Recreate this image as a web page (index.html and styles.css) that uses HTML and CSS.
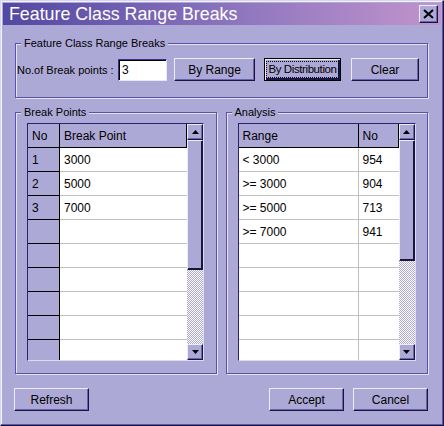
FILE: index.html
```html
<!DOCTYPE html>
<html>
<head>
<meta charset="utf-8">
<link rel="stylesheet" href="styles.css">
</head>
<body>
<div class="window">
  <div class="titlebar">
    <span class="title">Feature Class Range Breaks</span>
    <span class="close"><svg width="11" height="10" viewBox="0 0 11 10"><path d="M1 1 L10 9 M10 1 L1 9" stroke="#000" stroke-width="2"/></svg></span>
  </div>
  <div class="content">
    <fieldset class="group group-top">
      <legend>Feature Class Range Breaks</legend>
      <div class="row">
        <span class="label">No.of Break points :</span>
        <span class="input">3</span>
        <span class="btn btn-range">By Range</span>
        <span class="btn btn-default btn-dist"><span class="focus">By Distribution</span></span>
        <span class="btn btn-clear">Clear</span>
      </div>
    </fieldset>
    <div class="panels">
      <fieldset class="group panel panel-left">
        <legend>Break Points</legend>
        <div class="grid grid-left">
          <div class="table">
            <div class="tr head"><div class="td c-no hd">No</div><div class="td c-bp hd">Break Point</div></div>
            <div class="tr"><div class="td c-no">1</div><div class="td c-bp">3000</div></div>
            <div class="tr"><div class="td c-no">2</div><div class="td c-bp">5000</div></div>
            <div class="tr"><div class="td c-no">3</div><div class="td c-bp">7000</div></div>
            <div class="tr"><div class="td c-no"></div><div class="td c-bp"></div></div>
            <div class="tr"><div class="td c-no"></div><div class="td c-bp"></div></div>
            <div class="tr"><div class="td c-no"></div><div class="td c-bp"></div></div>
            <div class="tr"><div class="td c-no"></div><div class="td c-bp"></div></div>
            <div class="tr"><div class="td c-no"></div><div class="td c-bp"></div></div>
            <div class="tr"><div class="td c-no"></div><div class="td c-bp"></div></div>
          </div>
          <div class="scroll">
            <div class="sbtn"><svg width="7" height="4" viewBox="0 0 7 4"><path d="M3.5 0 L7 4 L0 4 Z" fill="#000"/></svg></div>
            <div class="thumb thumb-left"></div>
            <div class="track"></div>
            <div class="sbtn"><svg width="7" height="4" viewBox="0 0 7 4"><path d="M0 0 L7 0 L3.5 4 Z" fill="#000"/></svg></div>
          </div>
        </div>
      </fieldset>
      <fieldset class="group panel panel-right">
        <legend>Analysis</legend>
        <div class="grid grid-right">
          <div class="table">
            <div class="tr head"><div class="td c-range hd">Range</div><div class="td c-n hd">No</div></div>
            <div class="tr"><div class="td c-range">&lt; 3000</div><div class="td c-n">954</div></div>
            <div class="tr"><div class="td c-range">&gt;= 3000</div><div class="td c-n">904</div></div>
            <div class="tr"><div class="td c-range">&gt;= 5000</div><div class="td c-n">713</div></div>
            <div class="tr"><div class="td c-range">&gt;= 7000</div><div class="td c-n">941</div></div>
            <div class="tr"><div class="td c-range"></div><div class="td c-n"></div></div>
            <div class="tr"><div class="td c-range"></div><div class="td c-n"></div></div>
            <div class="tr"><div class="td c-range"></div><div class="td c-n"></div></div>
            <div class="tr"><div class="td c-range"></div><div class="td c-n"></div></div>
            <div class="tr"><div class="td c-range"></div><div class="td c-n"></div></div>
          </div>
          <div class="scroll">
            <div class="sbtn"><svg width="7" height="4" viewBox="0 0 7 4"><path d="M3.5 0 L7 4 L0 4 Z" fill="#000"/></svg></div>
            <div class="thumb thumb-right"></div>
            <div class="track"></div>
            <div class="sbtn"><svg width="7" height="4" viewBox="0 0 7 4"><path d="M0 0 L7 0 L3.5 4 Z" fill="#000"/></svg></div>
          </div>
        </div>
      </fieldset>
    </div>
    <div class="footer">
      <span class="btn btn-foot">Refresh</span>
      <span class="spacer"></span>
      <span class="btn btn-foot">Accept</span>
      <span class="btn btn-foot btn-cancel">Cancel</span>
    </div>
  </div>
</div>
</body>
</html>
```
FILE: styles.css
```css
* { box-sizing: border-box; }
body {
  margin: 0;
  font-family: "Liberation Sans", Arial, sans-serif;
  font-size: 11px;
  color: #000;
}
.window {
  width: 444px;
  height: 426px;
  background: #ada9d6;
  border: 1px solid;
  border-color: #d8d5f0 #1a1440 #1a1440 #d8d5f0;
  padding: 2px;
  box-shadow: inset -1px -1px 0 #5e57a6, inset 1px 1px 0 #f4f2ff;
}
.titlebar {
  height: 22px;
  display: flex;
  align-items: center;
  background: linear-gradient(90deg, #5247a2 0%, #8f77bf 55%, #c294cc 100%);
  color: #fff;
  padding: 0 3px 0 6px;
}
.title {
  flex: 1;
  font-size: 17.8px;
  line-height: 22px;
}
.close {
  width: 19px;
  height: 18px;
  background: #ada9d6;
  border: 1px solid;
  border-color: #eeecfa #1a1440 #1a1440 #eeecfa;
  box-shadow: inset -1px -1px 0 #6a63b0;
  display: flex;
  align-items: center;
  justify-content: center;
}
.content {
  padding: 0 13px 0 12px;
}
.group {
  margin: 0;
  border: 1px solid #5a52a6;
  box-shadow: 1px 1px 0 #e4e2f6, inset 1px 1px 0 #e4e2f6;
  padding: 0;
}
.group legend {
  font-size: 11px;
  line-height: 13px;
  padding: 0 3px;
  margin-left: 5px;
  background: #ada9d6;
}
.group-top {
  margin-top: 12px;
  height: 61px;
}
.row {
  display: flex;
  align-items: center;
  margin-top: 8px;
}
.label {
  margin-left: 1px;
  width: 101px;
  white-space: nowrap;
}
.input {
  width: 49px;
  height: 22px;
  background: #fff;
  border: 1px solid;
  border-color: #3a3288 #e8e6f8 #e8e6f8 #3a3288;
  box-shadow: inset 1px 1px 0 #000;
  font-size: 12px;
  line-height: 20px;
  padding-left: 3px;
}
.btn {
  height: 23px;
  display: flex;
  align-items: center;
  justify-content: center;
  background: #ada9d6;
  border: 1px solid;
  border-color: #eeecfa #1a1440 #1a1440 #eeecfa;
  box-shadow: inset -1px -1px 0 #6a63b0;
  font-size: 12px;
  white-space: nowrap;
}
.btn-range { margin-left: 7px; width: 81px; }
.btn-dist { margin-left: 9px; width: 77px; }
.btn-clear { margin-left: 10px; width: 68px; }
.btn-default {
  border: 1px solid #000;
  box-shadow: inset 1px 1px 0 #eeecfa, inset -2px -2px 0 #1a1440;
}
.focus {
  border: 1px dotted #000;
  padding: 0 1px;
  line-height: 15px;
  font-size: 11.5px;
  letter-spacing: -0.4px;
  white-space: nowrap;
}
.panels {
  display: flex;
  margin-top: 8px;
  gap: 9px;
}
.panel {
  height: 268px;
}
.panel-left { width: 202px; }
.panel-right { width: 203px; }
.grid {
  display: flex;
  height: 238px;
  margin-top: 4px;
  border-left: 1px solid #2a2270;
  border-top: 1px solid #2a2270;
  border-right: 1px solid #dcd9f2;
  border-bottom: 1px solid #dcd9f2;
  overflow: hidden;
  background: #fff;
}
.grid-left { margin-left: 11px; width: 177px; }
.grid-right { margin-left: 11px; width: 178px; }
.table {
  flex: 1;
  overflow: hidden;
  font-size: 12px;
}
.tr {
  display: flex;
  height: 24px;
}
.td {
  height: 24px;
  line-height: 24px;
  padding-left: 4px;
  border-bottom: 1px solid #c0c0c0;
  border-right: 1px solid #c0c0c0;
}
.hd {
  background: #ada9d6;
  border-bottom: 1px solid #000;
  border-right: 1px solid #000;
}
.c-no {
  width: 32px;
  background: #ada9d6;
  border-bottom-color: #000;
  border-right-color: #000;
}
.c-bp { flex: 1; border-right: none; }
.c-range { width: 120px; }
.c-n { flex: 1; border-right: none; }
.head .c-bp, .head .c-n { border-right: 1px solid #000; }
.scroll {
  width: 16px;
  display: flex;
  flex-direction: column;
  background: #ada9d6;
}
.sbtn {
  height: 16px;
  display: flex;
  align-items: center;
  justify-content: center;
  background: #ada9d6;
  border: 1px solid;
  border-color: #eeecfa #1a1440 #1a1440 #eeecfa;
  box-shadow: inset -1px -1px 0 #6a63b0;
}
.thumb {
  background: #ada9d6;
  border: 1px solid;
  border-color: #eeecfa #1a1440 #1a1440 #eeecfa;
  box-shadow: inset -1px -1px 0 #1a1440;
}
.thumb-left { height: 130px; }
.thumb-right { height: 121px; }
.track {
  flex: 1;
  background-color: #ada9d6;
  background-image: repeating-conic-gradient(#ffffff 0 25%, #ada9d6 0 50%);
  background-size: 2px 2px;
}
.footer {
  display: flex;
  margin-top: 14px;
  margin-left: -1px;
}
.spacer { flex: 1; }
.btn-foot { width: 75px; }
.btn-cancel { margin-left: 9px; }
```
